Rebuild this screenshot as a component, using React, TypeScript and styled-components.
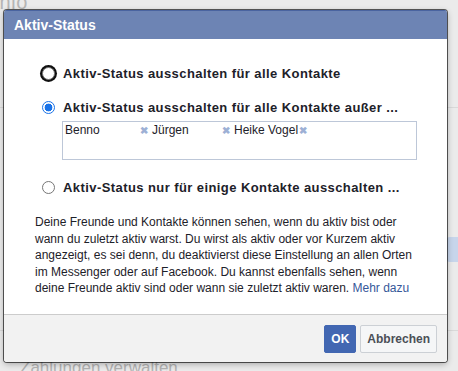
import styled, { createGlobalStyle } from "styled-components";

const GlobalStyle = createGlobalStyle`
	html, body {
		margin: 0;
		padding: 0;
		background: #ebebeb;
		font-family: "Liberation Sans", Arial, Helvetica, sans-serif;
	}
`;

// Page: the dimmed settings page that sits behind the dialog
const Page = styled.div`
	position: relative;
	width: 458px;
	height: 371px;
	overflow: hidden;
	background: #ebebeb;
	display: flex;
	flex-direction: column;
`;

const PageHeading = styled.h2`
	margin: -10px 0 0 -6px;
	font-size: 20px;
	line-height: 24px;
	font-weight: normal;
	color: #b5b5b5;
`;

const PageRow = styled.div<{ $height: number }>`
	height: ${({ $height }) => $height}px;
	border-bottom: 1px solid #d9d9d9;
	display: flex;
	justify-content: flex-end;
	align-items: flex-start;
	flex-shrink: 0;
`;

const GhostButton = styled.div`
	margin-top: 129px;
	margin-right: -20px;
	width: 32px;
	height: 25px;
	border-radius: 4px;
	background: #c7d5eb;
`;

const PageLink = styled.div`
	padding: 27px 0 0 20px;
	font-size: 17px;
	line-height: 20px;
	color: #b3b3b3;
`;

// Dialog: lies over the page
const Dialog = styled.div`
	position: absolute;
	left: 4px;
	top: 10px;
	width: 443px;
	border-radius: 3px;
	background: #fff;
	box-shadow:
		0 0 0 1px rgba(0, 0, 0, 0.62),
		0 2px 6px rgba(0, 0, 0, 0.3);
	overflow: hidden;
`;

const Header = styled.div`
	height: 29px;
	box-sizing: border-box;
	background: #6d84b4;
	border-top: 1px solid #4a64a0;
	padding-left: 10px;
	color: #fff;
	font-size: 14px;
	font-weight: bold;
	line-height: 28px;
`;

const Body = styled.div`
	padding: 26px 12px 17px 31px;
	color: #1d2129;
`;

const Option = styled.label<{ $gap: number }>`
	display: flex;
	align-items: center;
	margin: ${({ $gap }) => $gap}px 0 0 7px;
	height: 17px;
	font-size: 13px;
	font-weight: bold;
	letter-spacing: 0.42px;
	color: #1d2129;
`;

// Radio: drawn by hand so the focus ring stays round
const Radio = styled.input.attrs({ type: "radio" })<{ $focused?: boolean }>`
	appearance: none;
	box-sizing: border-box;
	width: 13px;
	height: 13px;
	margin: 0 8px 0 0;
	border-radius: 50%;
	border: 1px solid #767676;
	background: #fff;
	flex-shrink: 0;
	box-shadow: ${({ $focused }) => ($focused ? "0 0 0 2px #101010" : "none")};

	&:checked {
		border-color: #1a73e8;
		background: radial-gradient(circle, #1a73e8 0 3.6px, #fff 4.2px);
	}
`;

const TokenBox = styled.div`
	margin: 5px 0 0 27px;
	width: 355px;
	height: 39px;
	box-sizing: border-box;
	border: 1px solid #bdc7d8;
	padding: 1px 2px;
	display: flex;
	align-items: flex-start;
	gap: 4px;
	font-size: 12px;
	line-height: 15px;
`;

const Token = styled.span<{ $width?: number }>`
	display: inline-flex;
	justify-content: space-between;
	width: ${({ $width }) => ($width ? `${$width}px` : "auto")};
	gap: 1px;
	color: #1d2129;
`;

const Remove = styled.span`
	color: #9db0d5;
	font-size: 10px;
	font-weight: bold;
`;

const Text = styled.p`
	margin: 18px 0 0;
	font-size: 12px;
	line-height: 16.56px;
	color: #1d2129;
`;

const Link = styled.a`
	color: #365899;
	text-decoration: none;
`;

const Footer = styled.div`
	border-top: 1px solid #cccccc;
	background: #f2f2f2;
	padding: 10px 10px 9px;
	display: flex;
	justify-content: flex-end;
	gap: 4px;
`;

const Button = styled.button<{ $primary?: boolean }>`
	height: 28px;
	padding: 0 6px;
	border-radius: 2px;
	border: 1px solid ${({ $primary }) => ($primary ? "#4267b2" : "#ccd0d5")};
	background: ${({ $primary }) => ($primary ? "#4267b2" : "#f5f6f7")};
	color: ${({ $primary }) => ($primary ? "#fff" : "#4b4f56")};
	font-family: "Liberation Sans", Arial, sans-serif;
	font-size: 12px;
	font-weight: bold;
`;

const tokens = [
	{ name: "Benno", width: 83 },
	{ name: "Jürgen", width: 78 },
	{ name: "Heike Vogel" },
];

export default function App() {
	return (
		<>
			<GlobalStyle />
			<Page>
				<PageHeading>Info</PageHeading>
				<PageRow $height={93} />
				<PageRow $height={222}>
					<GhostButton />
				</PageRow>
				<PageLink>Zahlungen verwalten</PageLink>

				<Dialog>
					<Header>Aktiv-Status</Header>
					<Body>
						<Option $gap={0}>
							<Radio name="status" $focused />
							Aktiv-Status ausschalten für alle Kontakte
						</Option>
						<Option $gap={17}>
							<Radio name="status" defaultChecked />
							Aktiv-Status ausschalten für alle Kontakte außer ...
						</Option>
						<TokenBox>
							{tokens.map((t) => (
								<Token key={t.name} $width={t.width}>
									{t.name}
									<Remove>✖</Remove>
								</Token>
							))}
						</TokenBox>
						<Option $gap={19}>
							<Radio name="status" />
							Aktiv-Status nur für einige Kontakte ausschalten ...
						</Option>
						<Text>
							Deine Freunde und Kontakte können sehen, wenn du aktiv bist oder
							<br />
							wann du zuletzt aktiv warst. Du wirst als aktiv oder vor Kurzem aktiv
							<br />
							angezeigt, es sei denn, du deaktivierst diese Einstellung an allen Orten
							<br />
							im Messenger oder auf Facebook. Du kannst ebenfalls sehen, wenn
							<br />
							deine Freunde aktiv sind oder wann sie zuletzt aktiv waren.{" "}
							<Link href="#">Mehr dazu</Link>
						</Text>
					</Body>
					<Footer>
						<Button $primary>OK</Button>
						<Button>Abbrechen</Button>
					</Footer>
				</Dialog>
			</Page>
		</>
	);
}
